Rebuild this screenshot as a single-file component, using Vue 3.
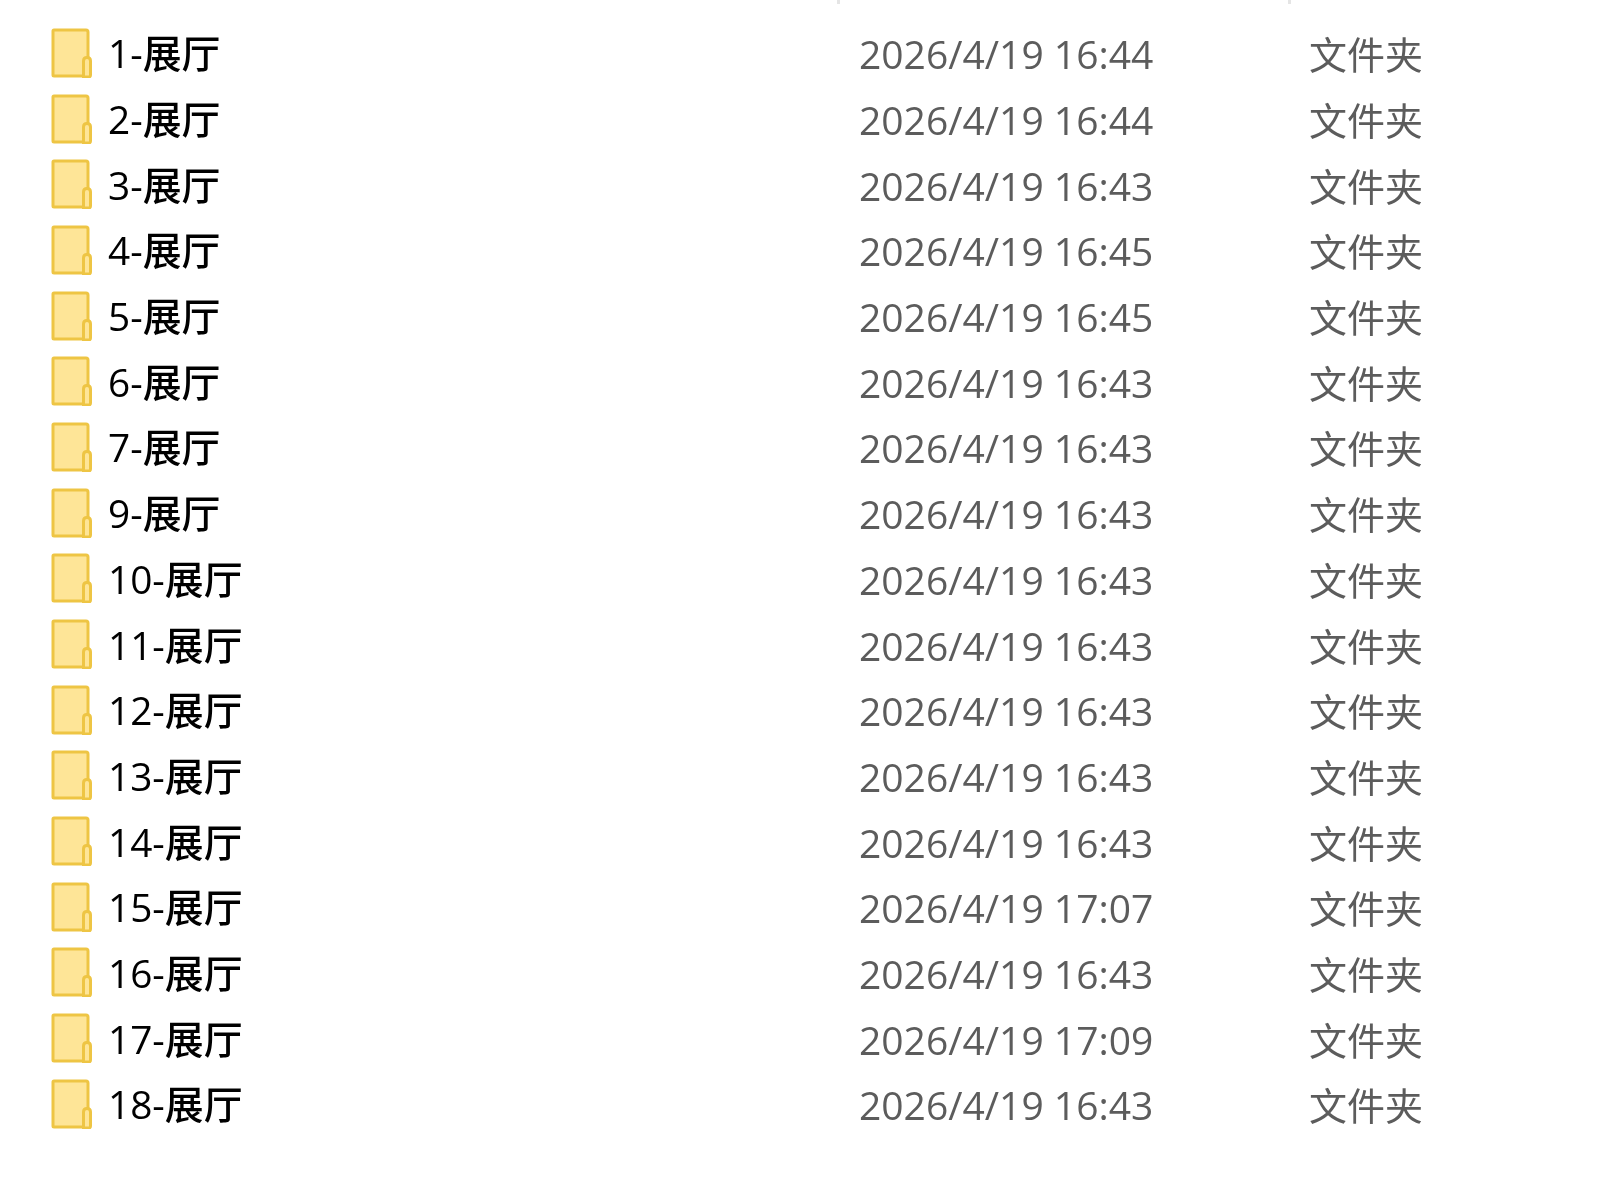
<template>
  <div class="explorer">
    <div class="head">
      <span class="tick tick-date"></span>
      <span class="tick tick-type"></span>
    </div>
    <div v-for="row in rows" :key="row.name" class="row">
      <div class="name">
        <svg class="folder" viewBox="0 0 41 50" width="41" height="50">
          <path d="M3 2H35Q37 2 37 4V48H3Q2 48 2 47V3Q2 2 3 2Z" fill="#fee597" stroke="#eec544" stroke-width="3" />
          <path d="M32.5 33Q32.5 29.5 36 29.5Q39.5 29.5 39.5 33V47Q39.5 49 37.5 49H32.5Z" fill="#fee597" stroke="#eec544" stroke-width="3" />
        </svg>
        <span class="label">{{ row.name }}</span>
      </div>
      <div class="date">2026/4/19 {{ row.time }}</div>
      <div class="type">文件夹</div>
    </div>
  </div>
</template>

<script setup>
const rows = [
  ['1', '16:44'], ['2', '16:44'], ['3', '16:43'], ['4', '16:45'],
  ['5', '16:45'], ['6', '16:43'], ['7', '16:43'], ['9', '16:43'],
  ['10', '16:43'], ['11', '16:43'], ['12', '16:43'], ['13', '16:43'],
  ['14', '16:43'], ['15', '17:07'], ['16', '16:43'], ['17', '17:09'],
  ['18', '16:43']
].map(([n, time]) => ({ name: `${n}-展厅`, time }))
</script>

<style>
body {
  background: #fff;
}
</style>

<style scoped>
.explorer {
  width: 1600px;
  height: 1200px;
  overflow: hidden;
  background: #fff;
  font-family: "Open Sans", "Noto Sans CJK SC", sans-serif;
  font-size: 38px;
  filter: blur(0.6px);
}

.head {
  display: flex;
  height: 20px;
  position: relative;
}

.tick {
  position: absolute;
  top: 0;
  width: 3px;
  height: 4px;
  background: #e5e5e5;
}

.tick-date { left: 837px; }
.tick-type { left: 1288px; }

.row {
  display: grid;
  grid-template-columns: 859px 450px 1fr;
  height: 65.7px;
  align-items: center;
  white-space: nowrap;
}

.name {
  display: flex;
  align-items: center;
  gap: 16px;
  padding-left: 51px;
  color: #000;
  font-size: 38.8px;
}

.label {
  font-weight: 500;
  padding-bottom: 3px;
}

.folder {
  flex: none;
}

.date,
.type {
  color: #5c5c5c;
}

.date {
  font-size: 39px;
  padding-top: 2px;
}
</style>
